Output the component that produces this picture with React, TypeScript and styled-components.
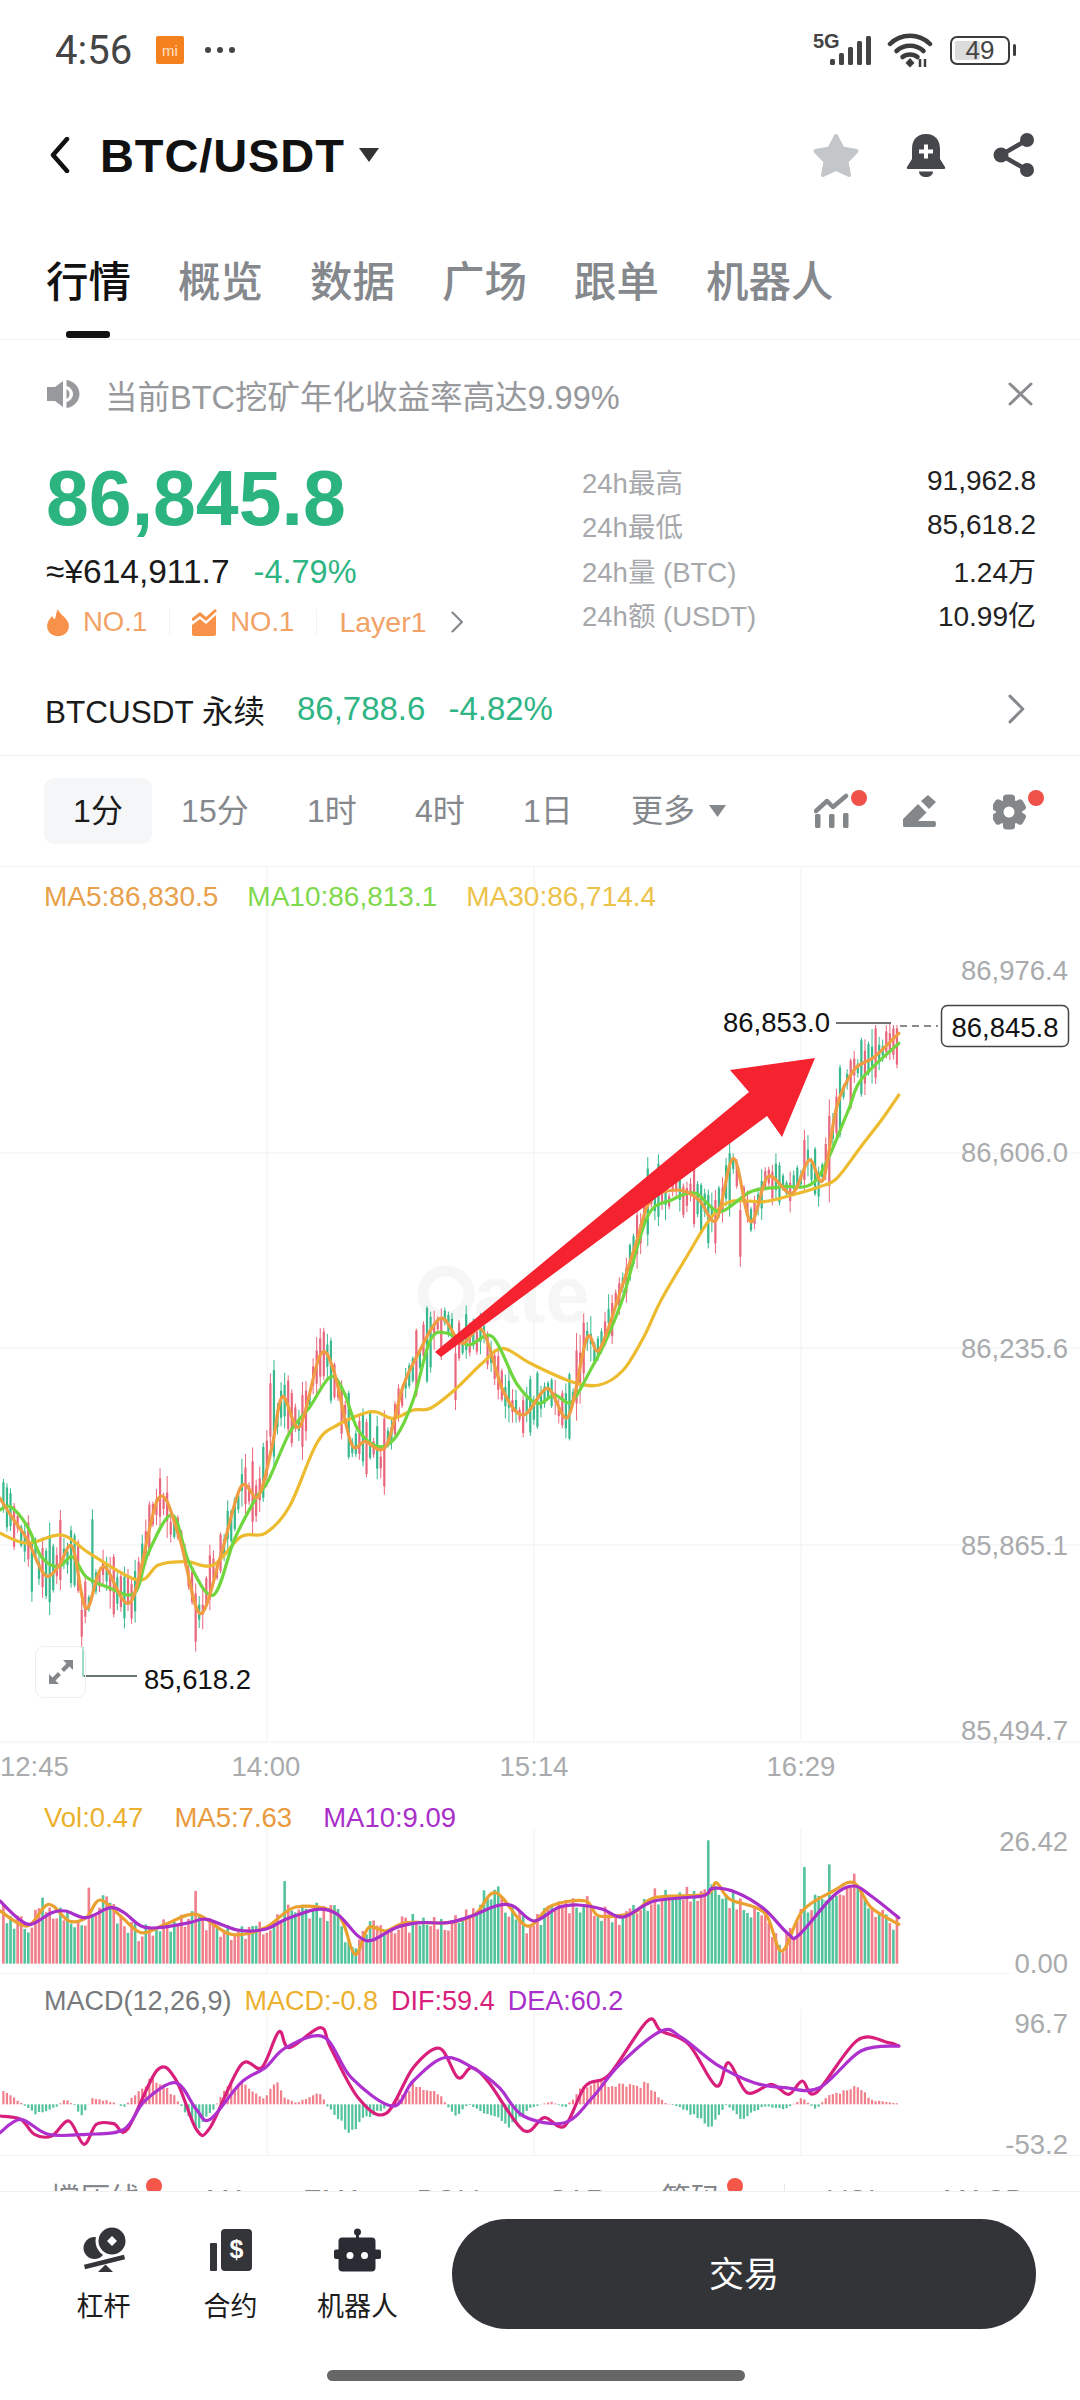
import styled, { createGlobalStyle } from "styled-components";

const GlobalStyle = createGlobalStyle`
  html, body {
    margin: 0;
    padding: 0;
    background: #fff;
    font-family: "Liberation Sans", "Noto Sans CJK SC", sans-serif;
  }
`;

const Page = styled.div`
  width: 1080px;
  height: 2400px;
  background: #fff;
  overflow: hidden;
  display: flex;
  flex-direction: column;
`;

/* ---------- status bar ---------- */
const StatusBar = styled.div`
  height: 100px;
  flex: none;
  display: flex;
  align-items: center;
  padding: 0 70px 0 55px;
  box-sizing: border-box;
  color: #444;
`;

const Clock = styled.span`
  font-family: Roboto, "Liberation Sans", sans-serif;
  font-size: 40px;
  width: 101px;
`;

const MiBadge = styled.span`
  width: 28px;
  height: 28px;
  background: #f5801e;
  border-radius: 2px;
  color: #ffe3c8;
  font-size: 15px;
  display: flex;
  align-items: center;
  justify-content: center;
`;

const MoreDots = styled.span`
  display: flex;
  gap: 6px;
  margin-left: 21px;
  i {
    width: 6px;
    height: 6px;
    background: #444;
    border-radius: 50%;
  }
`;

const StatusRight = styled.div`
  margin-left: auto;
  display: flex;
  align-items: center;
  gap: 12px;
`;

const Battery = styled.div`
  position: relative;
  width: 60px;
  height: 29px;
  box-sizing: border-box;
  border: 2.5px solid #3c3c3c;
  border-radius: 7px;
  margin-left: 5px;
  display: flex;
  align-items: center;
  justify-content: center;
  font-size: 26px;
  color: #444;
  &::before {
    content: "";
    position: absolute;
    left: 3px;
    top: 3px;
    bottom: 3px;
    width: 25px;
    background: #dcdcdc;
    border-radius: 2px;
  }
  &::after {
    content: "";
    position: absolute;
    right: -8px;
    top: 6px;
    width: 3px;
    height: 12px;
    background: #3c3c3c;
    border-radius: 2px;
  }
  span {
    position: relative;
  }
`;

/* ---------- header ---------- */
const Header = styled.div`
  height: 110px;
  flex: none;
  display: flex;
  align-items: center;
  padding: 0 45px 0 50px;
  box-sizing: border-box;
`;

const Title = styled.h1`
  margin: 0 14px 0 30px;
  font-size: 47px;
  font-weight: 700;
  letter-spacing: 0.9px;
  color: #111;
`;

const HeaderIcons = styled.div`
  margin-left: auto;
  display: flex;
  align-items: center;
  gap: 47px;
`;

/* ---------- tabs ---------- */
const TabBar = styled.div`
  height: 130px;
  flex: none;
  box-sizing: border-box;
  padding: 51px 0 0 46px;
  display: flex;
  gap: 47px;
  border-bottom: 1px solid #f2f2f2;
`;

const Tab = styled.div<{ $active?: boolean }>`
  position: relative;
  height: 44px;
  line-height: 44px;
  font-size: 42.5px;
  font-weight: 500;
  color: ${(p) => (p.$active ? "#111" : "#85888c")};
  &::after {
    content: "";
    display: ${(p) => (p.$active ? "block" : "none")};
    position: absolute;
    left: 20px;
    top: 70px;
    width: 44px;
    height: 7px;
    border-radius: 3px;
    background: #111;
  }
`;

/* ---------- notice ---------- */
const Notice = styled.div`
  height: 108px;
  margin-bottom: 2px;
  flex: none;
  box-sizing: border-box;
  display: flex;
  align-items: center;
  padding: 0 47px 0 47px;
  color: #97999c;
  font-size: 32.5px;
  gap: 25px;
  svg:last-child {
    margin-left: auto;
  }
`;

/* ---------- ticker ---------- */
const Ticker = styled.div`
  height: 210px;
  flex: none;
  display: flex;
  padding: 0 44px 0 46px;
  box-sizing: border-box;
`;

const TickerLeft = styled.div`
  width: 536px;
  flex: none;
`;

const LastPrice = styled.div`
  height: 96px;
  line-height: 96px;
  font-size: 77px;
  font-weight: 700;
  color: #2bb47f;
`;

const FiatRow = styled.div`
  height: 52px;
  display: flex;
  align-items: center;
  font-size: 33.5px;
  color: #1a1a1a;
  gap: 24px;
`;

const Change = styled.span`
  color: #2fb584;
  font-size: 32.5px;
`;

const BadgeRow = styled.div`
  height: 48px;
  display: flex;
  align-items: center;
  font-size: 27.5px;
  color: #f3a266;
`;

const BadgeDivider = styled.i`
  width: 1px;
  height: 26px;
  background: #f2f2f2;
  margin: 0 22px;
`;

const BadgeLabel = styled.span`
  margin-left: 13px;
`;

const LayerLabel = styled.span`
  font-size: 28.5px;
  margin-right: 24px;
`;

const StatList = styled.div`
  flex: 1;
  padding-top: 9px;
`;

const StatRow = styled.div`
  height: 44.3px;
  display: flex;
  align-items: center;
  justify-content: space-between;
  font-size: 27.5px;
`;

const StatLabel = styled.span`
  color: #a6a8ab;
`;

const StatValue = styled.span`
  color: #222;
  font-size: 28px;
`;

/* ---------- perp row ---------- */
const PerpRow = styled.div`
  height: 96px;
  flex: none;
  box-sizing: border-box;
  padding: 3px 55px 0 45px;
  display: flex;
  align-items: center;
  border-bottom: 1px solid #f0f0f0;
  svg {
    margin-left: auto;
  }
`;

const PerpName = styled.span`
  font-size: 31.5px;
  color: #1a1a1a;
  margin-right: 32px;
`;

const PerpNum = styled.span`
  font-size: 33px;
  color: #2fb584;
  margin-right: 23px;
`;

/* ---------- interval bar ---------- */
const IntervalBar = styled.div`
  height: 111px;
  flex: none;
  box-sizing: border-box;
  display: flex;
  align-items: center;
  padding: 0 35px 0 44px;
  border-bottom: 1px solid #f2f2f2;
`;

const IntervalItem = styled.div<{ $active?: boolean }>`
  height: 66px;
  line-height: 66px;
  padding: 0 29.1px;
  font-size: 32px;
  border-radius: 10px;
  color: ${(p) => (p.$active ? "#1a1a1a" : "#85888c")};
  background: ${(p) => (p.$active ? "#f5f6f7" : "transparent")};
  display: flex;
  align-items: center;
  gap: 14px;
`;

const ToolIcons = styled.div`
  margin-left: auto;
  display: flex;
  align-items: center;
  gap: 36px;
`;

/* ---------- chart panes ---------- */
const Pane = styled.div<{ $h: number }>`
  position: relative;
  height: ${(p) => p.$h}px;
  flex: none;
  svg {
    display: block;
  }
`;

const Legend = styled.div<{ $top: number; $size?: number }>`
  position: absolute;
  left: 44px;
  top: ${(p) => p.$top}px;
  display: flex;
  font-size: ${(p) => p.$size ?? 27.5}px;
  line-height: 32px;
`;

const LegendItem = styled.span<{ $color: string; $gap?: number }>`
  color: ${(p) => p.$color};
  margin-right: ${(p) => p.$gap ?? 0}px;
`;

const ExpandButton = styled.div`
  position: absolute;
  left: 35px;
  top: 779px;
  width: 51px;
  height: 52px;
  box-sizing: border-box;
  border: 1.5px solid #eeeeee;
  border-radius: 9px;
  display: flex;
  align-items: center;
  justify-content: center;
`;

const AxisText = styled.text<{ $anchor?: string; $color?: string }>`
  font-family: "Liberation Sans", sans-serif;
  font-size: 27.5px;
  fill: ${(p) => p.$color ?? "#a9abad"};
  text-anchor: ${(p) => p.$anchor ?? "end"};
  dominant-baseline: central;
`;

const Watermark = styled.text`
  font-family: "Liberation Sans", sans-serif;
  font-size: 80px;
  font-weight: 700;
  fill: #f6f6f6;
`;

/* ---------- clipped indicator row ---------- */
const IndicatorRow = styled.div`
  height: 35px;
  flex: none;
  overflow: hidden;
  box-sizing: border-box;
  padding: 28px 0 0 50px;
  display: flex;
  align-items: baseline;
  color: #85888c;
`;

const IndicatorItem = styled.span<{ $cn?: boolean; $gap: number; $dot?: boolean }>`
  position: relative;
  font-size: ${(p) => (p.$cn ? 30 : 28)}px;
  line-height: 30px;
  margin-right: ${(p) => p.$gap}px;
  &::after {
    content: "";
    display: ${(p) => (p.$dot ? "block" : "none")};
    position: absolute;
    right: -22px;
    top: -6px;
    width: 16px;
    height: 16px;
    border-radius: 50%;
    background: #f4574a;
  }
`;

const IndicatorDivider = styled.i`
  width: 1px;
  height: 40px;
  background: #e8e8e8;
  margin-right: 43px;
  align-self: flex-start;
`;

/* ---------- bottom nav ---------- */
const BottomNav = styled.div`
  flex: 1;
  background: #fff;
  border-top: 1px solid #f0f0f0;
  box-sizing: border-box;
`;

const NavRow = styled.div`
  display: flex;
  padding: 27px 44px 0 40px;
`;

const NavItem = styled.div`
  width: 127px;
  padding-top: 8px;
  display: flex;
  flex-direction: column;
  align-items: center;
  font-size: 27px;
  color: #1c1c1c;
  svg {
    height: 46px;
  }
  span {
    margin-top: 17px;
    line-height: 34px;
  }
`;

const TradeButton = styled.div`
  margin-left: 31px;
  width: 584px;
  height: 110px;
  box-sizing: border-box;
  padding-bottom: 5px;
  border-radius: 55px;
  background: #323438;
  color: #fff;
  font-size: 35px;
  display: flex;
  align-items: center;
  justify-content: center;
`;

const HomeBar = styled.div`
  width: 418px;
  height: 11px;
  border-radius: 6px;
  background: #666;
  margin: 41px 0 0 327px;
`;

/* ---------- chart data ---------- */
type Pt = [number, number];

// traced points: x in crop units (1.452 per page px), y in crop units (3 per page px)
const MA5: Pt[] = [[0,595],[20,660],[40,720],[65,825],[85,800],[105,740],[125,925],[150,800],[190,905],[230,595],[260,710],[290,940],[320,770],[350,560],[375,590],[395,440],[410,290],[435,380],[465,165],[485,215],[510,430],[530,425],[560,440],[585,260],[605,170],[640,55],[670,130],[700,90],[730,270],[760,345],[795,265],[825,350],[852,115],[870,150],[900,-20],[925,-180],[945,-300],[985,-330],[1015,-300],[1040,-240],[1065,-425],[1090,-235],[1115,-370],[1150,-320],[1175,-420],[1195,-360],[1215,-580],[1240,-690],[1270,-730],[1305,-800]];
const MA10: Pt[] = [[0,630],[15,620],[40,680],[60,770],[85,800],[105,770],[125,830],[155,860],[195,880],[215,760],[250,645],[275,790],[310,885],[340,720],[370,600],[390,540],[420,400],[450,320],[480,230],[500,280],[520,390],[550,440],[575,410],[600,300],[625,120],[650,100],[680,135],[715,110],[750,250],[780,310],[805,285],[830,305],[860,200],[880,120],[905,-10],[940,-250],[975,-300],[1010,-320],[1045,-265],[1090,-325],[1135,-340],[1185,-360],[1230,-560],[1250,-660],[1305,-770]];
const MA30: Pt[] = [[0,700],[40,730],[90,705],[130,760],[200,840],[230,795],[270,785],[310,795],[350,710],[385,700],[420,620],[460,430],[490,375],[540,335],[570,355],[600,330],[625,325],[660,270],[700,190],[730,145],[770,190],[830,245],[870,255],[905,210],[935,110],[960,0],[1000,-140],[1030,-240],[1060,-295],[1110,-295],[1150,-315],[1190,-340],[1215,-365],[1250,-460],[1280,-540],[1305,-615]];

const VOL_MA5: Pt[] = [[0,390],[40,435],[70,370],[100,420],[125,410],[145,357],[175,405],[205,455],[240,430],[285,400],[335,460],[385,440],[430,378],[490,400],[515,520],[535,440],[560,450],[590,425],[650,425],[690,400],[720,335],[765,435],[800,375],[850,360],[870,405],[920,395],[950,350],[1025,340],[1040,305],[1060,355],[1110,395],[1135,510],[1165,390],[1210,330],[1240,305],[1265,380],[1305,430]];
const VOL_MA10: Pt[] = [[0,360],[25,410],[45,430],[75,395],[95,390],[125,410],[160,380],[180,395],[205,435],[230,440],[275,425],[300,415],[345,447],[385,445],[415,415],[460,385],[490,400],[520,465],[540,478],[575,440],[610,425],[650,425],[685,405],[720,375],[745,375],[775,420],[810,380],[840,372],[875,385],[905,408],[950,360],[1020,345],[1035,322],[1070,335],[1110,385],[1145,460],[1160,462],[1210,345],[1240,315],[1265,345],[1305,410]];

const DIF: Pt[] = [[0,1005],[30,1015],[50,1060],[75,1065],[100,1020],[122,1090],[140,1030],[165,1028],[185,1045],[228,868],[255,895],[285,1045],[305,1040],[350,852],[380,860],[405,752],[420,800],[465,740],[480,800],[520,950],[560,998],[600,860],[638,802],[665,890],[685,860],[710,905],[760,1048],[790,1010],[820,1035],[850,915],[885,880],[940,720],[960,750],[1000,790],[1040,915],[1058,845],[1085,935],[1120,910],[1145,940],[1165,900],[1185,935],[1245,778],[1290,785],[1305,795]];
const DEA: Pt[] = [[0,1055],[30,1015],[70,1060],[125,1060],[180,1045],[210,960],[255,905],[285,985],[305,1015],[350,905],[385,860],[415,800],[470,768],[510,890],[570,975],[600,900],[645,830],[690,865],[725,920],[760,1005],[820,1025],[860,950],[900,850],[960,750],[990,770],[1040,850],[1095,905],[1140,920],[1190,920],[1250,810],[1305,795]];
const HIST: Pt[] = [[0,55],[30,5],[50,-25],[80,-10],[95,15],[110,-5],[118,-35],[135,20],[165,5],[180,-8],[210,60],[225,80],[250,30],[265,-10],[285,-70],[305,-30],[330,50],[350,55],[385,15],[400,65],[415,15],[430,5],[465,30],[475,-5],[505,-75],[540,-30],[570,0],[600,55],[630,45],[645,10],[660,-35],[680,0],[700,-20],[740,-60],[770,-10],[800,8],[820,-10],[850,55],[900,60],[940,55],[965,5],[990,-10],[1035,-65],[1055,0],[1075,-40],[1110,-5],[1140,-15],[1165,18],[1185,-15],[1200,20],[1240,50],[1270,10],[1305,3]];

const RED = "#e9677c";
const GREEN = "#37b98d";
const VOL_RED = "#f07f8b";
const VOL_GREEN = "#52c39b";
const STEP = 3.56;
const COUNT = 252;

const px = (zx: number) => zx / 1.452;
const mainY = (y4: number) => y4 / 3 + 1300;
const subY = (zy: number) => zy / 3 + 1780;

function makeRandom(seed: number) {
  let s = seed;
  return () => {
    s = (s * 16807) % 2147483647;
    return s / 2147483647;
  };
}

function interp(points: Pt[], x: number) {
  if (x <= points[0][0]) return points[0][1];
  for (let i = 1; i < points.length; i++) {
    if (x <= points[i][0]) {
      const [x0, y0] = points[i - 1];
      const [x1, y1] = points[i];
      return y0 + ((y1 - y0) * (x - x0)) / (x1 - x0);
    }
  }
  return points[points.length - 1][1];
}

// catmull-rom through the page-space points
function smooth(points: Pt[], mapY: (y: number) => number) {
  const p = points.map(([x, y]) => [px(x), mapY(y)]);
  let d = `M${p[0][0].toFixed(1)} ${p[0][1].toFixed(1)}`;
  for (let i = 0; i < p.length - 1; i++) {
    const a = p[Math.max(i - 1, 0)];
    const b = p[i];
    const c = p[i + 1];
    const e = p[Math.min(i + 2, p.length - 1)];
    const c1x = b[0] + (c[0] - a[0]) / 6;
    const c1y = b[1] + (c[1] - a[1]) / 6;
    const c2x = c[0] - (e[0] - b[0]) / 6;
    const c2y = c[1] - (e[1] - b[1]) / 6;
    d += `C${c1x.toFixed(1)} ${c1y.toFixed(1)} ${c2x.toFixed(1)} ${c2y.toFixed(1)} ${c[0].toFixed(1)} ${c[1].toFixed(1)}`;
  }
  return d;
}

// wicks that stick out in the reference: [crop x, top, bottom, up?]
const WICKS: [number, number, number, boolean][] = [
  [120, 900, 1040, true], [285, 850, 1055, true], [232, 505, 680, true], [465, 85, 260, true],
  [555, 440, 535, true], [820, 250, 415, false], [640, 25, 180, true], [180, 800, 985, false],
  [660, 130, 330, true], [400, 180, 500, false], [393, 220, 440, true], [88, 630, 870, true],
  [135, 628, 880, false], [46, 700, 905, false], [748, 270, 368, false], [1190, -400, -280, false],
  [1167, -510, -330, true], [1060, -470, -250, false], [1037, -330, -140, true], [1075, -300, -100, true],
  [1292, -830, -720, true],
];

const candles = (() => {
  const rand = makeRandom(4217);
  return Array.from({ length: COUNT }, (_, i) => {
    const x = 3.4 + i * STEP;
    const zx = x * 1.452;
    const mid = interp(MA5, zx) + (rand() - 0.5) * 50;
    const half = 14 + rand() * rand() * 100;
    const wick = 5 + rand() * rand() * 55;
    let top = Math.max(mid - half - wick, -825);
    let bottom = mid + half + wick;
    let up = rand() > 0.5;
    const forced = WICKS.find((w) => Math.abs(w[0] - zx) < 2.6);
    if (forced) {
      top = forced[1];
      bottom = forced[2];
      up = forced[3];
    }
    const bodyTop = forced ? top + 30 : Math.max(mid - half, -815);
    const bodyBottom = forced ? bottom - 30 : mid + half;
    return { x, top, bottom, bodyTop, bodyBottom, up };
  });
})();

const SPIKES: Pt[] = [[1027, 178], [1167, 258], [1204, 250], [415, 300], [128, 320], [285, 330], [1240, 278], [950, 322], [705, 328], [60, 350]];

const volumes = (() => {
  const rand = makeRandom(913);
  return Array.from({ length: COUNT }, (_, i) => {
    const x = 3.4 + i * STEP;
    const zx = x * 1.452;
    const spike = SPIKES.find((s) => Math.abs(s[0] - zx) < 2.6);
    const base = interp(VOL_MA5, zx);
    const top = spike ? spike[1] : base + (rand() - 0.45) * 60;
    const green = spike ? [1027, 1167, 1204, 415, 705, 60].includes(spike[0]) : rand() > 0.52;
    return { x, top: Math.min(top, 546), green };
  });
})();

const bars = (() => {
  const rand = makeRandom(77);
  return Array.from({ length: COUNT }, (_, i) => {
    const x = 3.4 + i * STEP;
    const h = interp(HIST, x * 1.452) * (0.85 + rand() * 0.4);
    return { x, h };
  });
})();

const GRID_X = [267, 534, 801];

function MainChart() {
  return (
    <svg width="1080" height="921" viewBox="0 867 1080 921">
      <g stroke="#f6f6f6" strokeWidth="1.5">
        {GRID_X.map((x) => (
          <line key={x} x1={x} x2={x} y1={867} y2={1742} />
        ))}
        {[1153, 1348, 1545, 1742].map((y) => (
          <line key={y} x1={0} x2={1080} y1={y} y2={y} />
        ))}
      </g>
      <circle cx="446" cy="1294" r="23" fill="none" stroke="#f6f6f6" strokeWidth="11" />
      <Watermark x="474" y="1322">ate</Watermark>

      {candles.map((c) => (
        <g key={c.x} fill={c.up ? RED : GREEN}>
          <rect x={c.x - 0.5} y={mainY(c.top)} width="1" height={(c.bottom - c.top) / 3} />
          <rect x={c.x - 1.1} y={mainY(c.bodyTop)} width="2.2" height={(c.bodyBottom - c.bodyTop) / 3} />
        </g>
      ))}

      <g fill="none" strokeWidth="3.2" strokeLinejoin="round" strokeLinecap="round">
        <path d={smooth(MA30, mainY)} stroke="#edbb2f" />
        <path d={smooth(MA10, mainY)} stroke="#6fd63e" />
        <path d={smooth(MA5, mainY)} stroke="#f09c40" />
      </g>

      <polygon points="435,1352 749,1092 730,1070 815,1058 782,1137 767,1116 441,1357" fill="#f5222f" />

      <AxisText x="1068" y="970">86,976.4</AxisText>
      <AxisText x="1068" y="1152">86,606.0</AxisText>
      <AxisText x="1068" y="1348">86,235.6</AxisText>
      <AxisText x="1068" y="1545">85,865.1</AxisText>
      <AxisText x="1068" y="1730">85,494.7</AxisText>

      <AxisText x="0" y="1766" $anchor="start">12:45</AxisText>
      <AxisText x="266" y="1766" $anchor="middle">14:00</AxisText>
      <AxisText x="534" y="1766" $anchor="middle">15:14</AxisText>
      <AxisText x="801" y="1766" $anchor="middle">16:29</AxisText>

      <line x1="836" x2="891" y1="1023" y2="1023" stroke="#444" strokeWidth="1.5" />
      <AxisText x="830" y="1022" $color="#111">86,853.0</AxisText>
      <line x1="900" x2="938" y1="1026" y2="1026" stroke="#666" strokeWidth="1.5" strokeDasharray="7 5" />
      <rect x="941.5" y="1005.5" width="127" height="41" rx="6" fill="#fff" stroke="#444" strokeWidth="1.5" />
      <AxisText x="1005" y="1027" $anchor="middle" $color="#111">86,845.8</AxisText>

      <path d="M83 1647V1676H137" fill="none" stroke="#7fcfb0" strokeWidth="1.5" />
      <line x1="84" x2="137" y1="1676" y2="1676" stroke="#555" strokeWidth="1.5" />
      <AxisText x="144" y="1679" $anchor="start" $color="#111">85,618.2</AxisText>
    </svg>
  );
}

function VolumeChart() {
  return (
    <svg width="1080" height="185" viewBox="0 1788 1080 185">
      <g stroke="#f6f6f6" strokeWidth="1.5">
        {GRID_X.map((x) => (
          <line key={x} x1={x} x2={x} y1={1828} y2={1973} />
        ))}
      </g>
      <line x1="0" x2="1010" y1="1972.5" y2="1972.5" stroke="#f2f2f2" strokeWidth="1" />
      {volumes.map((v) => (
        <rect
          key={v.x}
          x={v.x - 1.3}
          y={subY(v.top)}
          width="2.6"
          height={subY(548) - subY(v.top)}
          fill={v.green ? VOL_GREEN : VOL_RED}
        />
      ))}
      <g fill="none" strokeWidth="3.2" strokeLinejoin="round" strokeLinecap="round">
        <path d={smooth(VOL_MA5, subY)} stroke="#eba12f" />
        <path d={smooth(VOL_MA10, subY)} stroke="#a92fca" />
      </g>
      <AxisText x="1068" y="1840">26.42</AxisText>
      <AxisText x="1068" y="1962">0.00</AxisText>
    </svg>
  );
}

function MacdChart() {
  return (
    <svg width="1080" height="182" viewBox="0 1973 1080 182">
      <g stroke="#f6f6f6" strokeWidth="1.5">
        {GRID_X.map((x) => (
          <line key={x} x1={x} x2={x} y1={2008} y2={2155} />
        ))}
      </g>
      <line x1="0" x2="1080" y1="2154.5" y2="2154.5" stroke="#f2f2f2" strokeWidth="1" />
      {bars.map((b) => (
        <rect
          key={b.x}
          x={b.x - 1.1}
          y={b.h >= 0 ? subY(970 - b.h) : subY(970)}
          width="2.2"
          height={Math.abs(b.h) / 3}
          fill={b.h >= 0 ? VOL_RED : VOL_GREEN}
        />
      ))}
      <g fill="none" strokeWidth="3.2" strokeLinejoin="round" strokeLinecap="round">
        <path d={smooth(DIF, subY)} stroke="#d81f7c" />
        <path d={smooth(DEA, subY)} stroke="#ad30cf" />
      </g>
      <AxisText x="1068" y="2022">96.7</AxisText>
      <AxisText x="1068" y="2143">-53.2</AxisText>
    </svg>
  );
}

/* ---------- icons ---------- */
const SignalIcon = () => (
  <svg width="62" height="34" viewBox="0 0 62 34">
    <text x="0" y="15" fontSize="20" fontWeight="700" fill="#444" fontFamily="Liberation Sans, sans-serif">5G</text>
    <g fill="#444">
      <rect x="17" y="26" width="5" height="6" rx="1.5" />
      <rect x="26" y="20" width="5" height="12" rx="1.5" />
      <rect x="35" y="14" width="5" height="18" rx="1.5" />
      <rect x="44" y="8" width="5" height="24" rx="1.5" />
      <rect x="53" y="3" width="5" height="29" rx="1.5" />
    </g>
  </svg>
);

const WifiIcon = () => (
  <svg width="46" height="36" viewBox="0 0 46 36">
    <g fill="none" stroke="#3c3c3c" strokeWidth="4.5" strokeLinecap="round">
      <path d="M3 12C14 1 32 1 43 12" />
      <path d="M9.5 19C17 12 29 12 36.5 19" />
      <path d="M15.5 25C19.5 21.5 26.5 21.5 30.5 25" />
    </g>
    <path d="M23 26L27.5 31L23 35.5L18.5 31Z" fill="#3c3c3c" />
    <path d="M33 27V35M38 27V35" stroke="#3c3c3c" strokeWidth="2.5" />
  </svg>
);

const BackIcon = () => (
  <svg width="20" height="36" viewBox="0 0 20 36">
    <path d="M17 2L3 18L17 34" fill="none" stroke="#111" strokeWidth="4.5" strokeLinecap="round" strokeLinejoin="round" />
  </svg>
);

const CaretIcon = ({ w = 20, color = "#333" }: { w?: number; color?: string }) => (
  <svg width={w} height={w * 0.7} viewBox="0 0 20 14">
    <path d="M0 0H20L10 14Z" fill={color} />
  </svg>
);

const StarIcon = () => (
  <svg width="46" height="44" viewBox="0 0 46 44">
    <polygon
      points="23,3 29.5,15.5 43.5,18 33.5,28.5 36,42 23,36 10,42 12.5,28.5 2.5,18 16.5,15.5"
      fill="#c4c7c9"
      stroke="#c4c7c9"
      strokeWidth="4"
      strokeLinejoin="round"
    />
  </svg>
);

const BellIcon = () => (
  <svg width="40" height="44" viewBox="0 0 40 44">
    <path d="M20 1C10 1 6 8 6 16V26L1 34Q0 36 3 36H37Q40 36 39 34L34 26V16C34 8 30 1 20 1Z" fill="#45474c" />
    <path d="M13 38.5H27C27 42 24 44 20 44C16 44 13 42 13 38.5Z" fill="#45474c" />
    <path d="M13 18.5H27M20 11.5V25.5" stroke="#fff" strokeWidth="4" />
  </svg>
);

const ShareIcon = () => (
  <svg width="42" height="44" viewBox="0 0 42 44" fill="#45474c">
    <circle cx="34" cy="7" r="7" />
    <circle cx="8" cy="22" r="7.5" />
    <circle cx="34" cy="37" r="7" />
    <path d="M34 7L8 22L34 37" fill="none" stroke="#45474c" strokeWidth="4.5" />
  </svg>
);

const SpeakerIcon = () => (
  <svg width="33" height="28" viewBox="0 0 33 28" fill="#97999c">
    <path d="M0 7H8L16 1V27L8 21H0Z" />
    <path d="M19.5 0C27 1 32.5 7 32.5 14C32.5 21 27 27 19.5 28V22C23 21 26 18 26 14C26 10 23 7 19.5 6Z" />
    <path d="M19.5 9C21.5 10 22.5 12 22.5 14C22.5 16 21.5 18 19.5 19Z" />
  </svg>
);

const CloseIcon = () => (
  <svg width="25" height="24" viewBox="0 0 25 24">
    <path d="M2 2L23 22M23 2L2 22" stroke="#8a8c8f" strokeWidth="3" strokeLinecap="round" />
  </svg>
);

const FireIcon = () => (
  <svg width="24" height="29" viewBox="0 0 24 27" fill="#f8924a">
    <path d="M12 0C13 5 19 7 22 13C25 20 20 27 12 27C4 27 -1 20 2 13C3 10 5 9 6 7C7 9 8 10 9 10C10 7 10 3 12 0Z" />
  </svg>
);

const TrendIcon = () => (
  <svg width="25" height="27" viewBox="0 0 25 27">
    <path d="M0 11L8 5L14 10L24 1" fill="none" stroke="#f8924a" strokeWidth="3" />
    <path d="M0 16L8 10L14 15L24 6V25Q24 27 22 27H2Q0 27 0 25Z" fill="#f8924a" />
  </svg>
);

const ChevronRight = ({ h = 30, color = "#85888c" }: { h?: number; color?: string }) => (
  <svg width={h * 0.56} height={h} viewBox="0 0 17 30">
    <path d="M2 2L15 15L2 28" fill="none" stroke={color} strokeWidth="3" strokeLinecap="round" strokeLinejoin="round" />
  </svg>
);

const IndicatorIcon = () => (
  <svg width="53" height="44" viewBox="0 -6 53 44">
    <path d="M2 16L13 6L19 12L32 1" fill="none" stroke="#84878a" strokeWidth="4.5" strokeLinecap="round" strokeLinejoin="round" />
    <g fill="#84878a">
      <rect x="1" y="19" width="5.5" height="14" rx="1.5" />
      <rect x="15" y="19" width="5.5" height="14" rx="1.5" />
      <rect x="29" y="18" width="5.5" height="15" rx="1.5" />
    </g>
    <circle cx="45" cy="3" r="8" fill="#f0524a" />
  </svg>
);

const PencilIcon = () => (
  <svg width="54" height="33" viewBox="0 0 54 33" fill="#84878a">
    <polygon points="18,6 25,0 33,7 26,14" />
    <path d="M0 24L15 9L23.5 17.5L15 26H31Q33 26 33 29Q33 32 31 32H1Q0 32 0 30Z" />
  </svg>
);

const GearIcon = () => (
  <svg width="52" height="44" viewBox="0 0 52 44">
    <g fill="#84878a" transform="translate(16 23)">
      <circle r="13" />
      {[0, 60, 120].map((r) => (
        <rect key={r} x="-6" y="-17.5" width="12" height="35" rx="3.5" transform={`rotate(${r})`} />
      ))}
    </g>
    <circle cx="16" cy="23" r="5.5" fill="#fff" />
    <circle cx="43" cy="9" r="8" fill="#f0524a" />
  </svg>
);

const ExpandIcon = () => (
  <svg width="26" height="26" viewBox="0 0 26 26" fill="#84878a">
    <path d="M15 1H25V11L21.5 7.5L16 13L13 10L18.5 4.5Z" />
    <path d="M11 25H1V15L4.5 18.5L10 13L13 16L7.5 21.5Z" />
  </svg>
);

const LeverageIcon = () => (
  <svg width="44" height="46" viewBox="0 0 44 46" fill="#333538">
    <circle cx="12.5" cy="21" r="11" />
    <circle cx="30" cy="14" r="16.5" fill="#fff" />
    <circle cx="30" cy="14" r="13.5" />
    <polygon points="30,9 35,14 30,19 25,14" fill="#fff" />
    <path d="M2.5 40L42.5 30" stroke="#333538" strokeWidth="4.5" />
    <polygon points="16,45 31,45 23.5,37.5" />
  </svg>
);

const ContractIcon = () => (
  <svg width="42" height="46" viewBox="0 0 42 42" fill="#333538">
    <rect x="0" y="14" width="7" height="28" rx="1" />
    <rect x="11" y="0" width="31" height="42" rx="4" />
    <text x="26.5" y="29" fontSize="25" fontWeight="700" textAnchor="middle" fill="#fff" fontFamily="Liberation Sans, sans-serif">$</text>
  </svg>
);

const RobotIcon = () => (
  <svg width="47" height="46" viewBox="0 0 47 43" fill="#2a2c33">
    <circle cx="23.5" cy="3.5" r="3.5" />
    <rect x="22" y="4" width="3" height="7" />
    <rect x="4.5" y="9" width="37" height="34" rx="4" />
    <rect x="0" y="21" width="47" height="9.5" rx="2" />
    <circle cx="16" cy="27" r="3.5" fill="#fff" />
    <circle cx="30.5" cy="27" r="3.5" fill="#fff" />
  </svg>
);

const STATS = [
  ["24h最高", "91,962.8"],
  ["24h最低", "85,618.2"],
  ["24h量 (BTC)", "1.24万"],
  ["24h额 (USDT)", "10.99亿"],
];

export default function App() {
  return (
    <Page>
      <GlobalStyle />
      <StatusBar>
        <Clock>4:56</Clock>
        <MiBadge>mi</MiBadge>
        <MoreDots>
          <i />
          <i />
          <i />
        </MoreDots>
        <StatusRight>
          <SignalIcon />
          <WifiIcon />
          <Battery>
            <span>49</span>
          </Battery>
        </StatusRight>
      </StatusBar>

      <Header>
        <BackIcon />
        <Title>BTC/USDT</Title>
        <CaretIcon />
        <HeaderIcons>
          <StarIcon />
          <BellIcon />
          <ShareIcon />
        </HeaderIcons>
      </Header>

      <TabBar>
        <Tab $active>行情</Tab>
        <Tab>概览</Tab>
        <Tab>数据</Tab>
        <Tab>广场</Tab>
        <Tab>跟单</Tab>
        <Tab>机器人</Tab>
      </TabBar>

      <Notice>
        <SpeakerIcon />
        <span>当前BTC挖矿年化收益率高达9.99%</span>
        <CloseIcon />
      </Notice>

      <Ticker>
        <TickerLeft>
          <LastPrice>86,845.8</LastPrice>
          <FiatRow>
            <span>≈¥614,911.7</span>
            <Change>-4.79%</Change>
          </FiatRow>
          <BadgeRow>
            <FireIcon />
            <BadgeLabel>NO.1</BadgeLabel>
            <BadgeDivider />
            <TrendIcon />
            <BadgeLabel>NO.1</BadgeLabel>
            <BadgeDivider />
            <LayerLabel>Layer1</LayerLabel>
            <ChevronRight h={22} />
          </BadgeRow>
        </TickerLeft>
        <StatList>
          {STATS.map(([label, value]) => (
            <StatRow key={label}>
              <StatLabel>{label}</StatLabel>
              <StatValue>{value}</StatValue>
            </StatRow>
          ))}
        </StatList>
      </Ticker>

      <PerpRow>
        <PerpName>BTCUSDT 永续</PerpName>
        <PerpNum>86,788.6</PerpNum>
        <PerpNum>-4.82%</PerpNum>
        <ChevronRight />
      </PerpRow>

      <IntervalBar>
        <IntervalItem $active>1分</IntervalItem>
        <IntervalItem>15分</IntervalItem>
        <IntervalItem>1时</IntervalItem>
        <IntervalItem>4时</IntervalItem>
        <IntervalItem>1日</IntervalItem>
        <IntervalItem>
          更多
          <CaretIcon w={17} color="#85888c" />
        </IntervalItem>
        <ToolIcons>
          <IndicatorIcon />
          <PencilIcon />
          <GearIcon />
        </ToolIcons>
      </IntervalBar>

      <Pane $h={922}>
        <MainChart />
        <Legend $top={14} $size={28}>
          <LegendItem $color="#e8a04a" $gap={29}>MA5:86,830.5</LegendItem>
          <LegendItem $color="#7fd94d" $gap={29}>MA10:86,813.1</LegendItem>
          <LegendItem $color="#ecc24a">MA30:86,714.4</LegendItem>
        </Legend>
        <ExpandButton>
          <ExpandIcon />
        </ExpandButton>
      </Pane>

      <Pane $h={185}>
        <VolumeChart />
        <Legend $top={13}>
          <LegendItem $color="#eab02e" $gap={31}>Vol:0.47</LegendItem>
          <LegendItem $color="#e89a3c" $gap={31}>MA5:7.63</LegendItem>
          <LegendItem $color="#a92fca">MA10:9.09</LegendItem>
        </Legend>
      </Pane>

      <Pane $h={182}>
        <MacdChart />
        <Legend $top={11} $size={27}>
          <LegendItem $color="#77797c" $gap={13}>MACD(12,26,9)</LegendItem>
          <LegendItem $color="#ecb02e" $gap={13}>MACD:-0.8</LegendItem>
          <LegendItem $color="#d81f7c" $gap={13}>DIF:59.4</LegendItem>
          <LegendItem $color="#a92fca">DEA:60.2</LegendItem>
        </Legend>
      </Pane>

      <IndicatorRow>
        <IndicatorItem $cn $dot $gap={66}>撑压线</IndicatorItem>
        <IndicatorItem $gap={55}>MA</IndicatorItem>
        <IndicatorItem $gap={53}>EMA</IndicatorItem>
        <IndicatorItem $gap={60}>BOLL</IndicatorItem>
        <IndicatorItem $gap={55}>SAR</IndicatorItem>
        <IndicatorItem $cn $dot $gap={63}>筹码</IndicatorItem>
        <IndicatorDivider />
        <IndicatorItem $gap={59}>VOL</IndicatorItem>
        <IndicatorItem $gap={0}>MACD</IndicatorItem>
      </IndicatorRow>

      <BottomNav>
        <NavRow>
          <NavItem>
            <LeverageIcon />
            <span>杠杆</span>
          </NavItem>
          <NavItem>
            <ContractIcon />
            <span>合约</span>
          </NavItem>
          <NavItem>
            <RobotIcon />
            <span>机器人</span>
          </NavItem>
          <TradeButton>交易</TradeButton>
        </NavRow>
        <HomeBar />
      </BottomNav>
    </Page>
  );
}
